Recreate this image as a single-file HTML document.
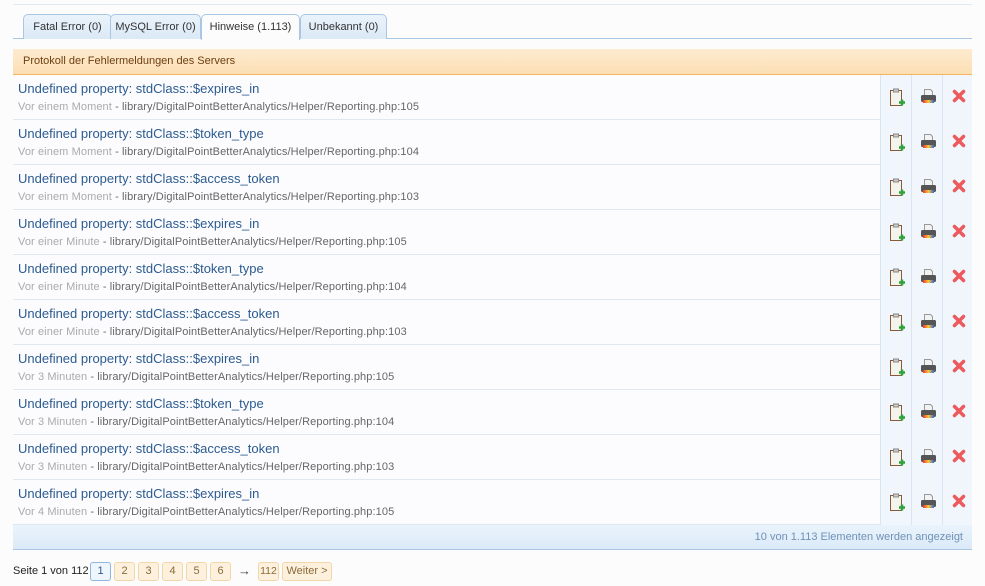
<!DOCTYPE html>
<html><head><meta charset="utf-8"><style>
*{margin:0;padding:0;box-sizing:border-box}
body{width:985px;height:586px;background:#fcfcfd;font-family:"Liberation Sans","DejaVu Sans",sans-serif;position:relative;overflow:hidden}
.topline{position:absolute;left:13px;top:4px;width:959px;height:1px;background:#dfeaf4}
.tabs{position:absolute;left:13px;top:14px;width:959px;height:25px;border-bottom:1px solid #a9c7e2}
.tab{position:absolute;top:0;height:25px;border:1px solid #a9c7e2;border-bottom:none;border-radius:5px 5px 0 0;background:linear-gradient(#eaf3fb,#dbe9f6);font-size:11px;color:#333;line-height:24px;text-align:center;white-space:nowrap}
.tab.act{background:#fcfcfd;height:26px}
.hdr{position:absolute;left:13px;top:49px;width:959px;height:26px;background:linear-gradient(#fdebd0,#fbdfb4);border-bottom:1px solid #f5b45d;font-size:11px;color:#6e3e10;line-height:25px;padding-left:10px}
.row{position:absolute;left:13px;width:959px;height:45px;border-bottom:1px solid #dde8f2;background:#fcfcfe}
.row .t{position:absolute;left:5px;top:6px;font-size:13px;color:#2b5b90}
.row .s{position:absolute;left:5px;top:26px;font-size:11px;color:#666;letter-spacing:0.1px}
.row .s i{font-style:normal;color:#aaa}
.c{position:absolute;top:0;width:31px;height:45px;background:#f0f6fc;border-left:1px solid #d8e6f3}
.c svg{position:absolute;left:8px;top:13px}
.foot{position:absolute;left:13px;top:525px;width:959px;height:25px;background:linear-gradient(#e9f3fc,#dceaf8);border-bottom:1px solid #a9c7e2;font-size:11px;color:#6f92b7;text-align:right;line-height:24px;padding-right:9px}
.pg{position:absolute;top:562px;font-size:11px;color:#222;line-height:18px}
.pb{position:absolute;top:562px;height:19px;border:1px solid #f3d7a8;background:#fdf1dd;border-radius:3px;font-size:11px;color:#8a6a3c;text-align:center;line-height:17px}
.pb.a{border-color:#8fb6dd;background:#eef5fc;color:#2b5b90}
</style></head><body>
<div class="topline"></div>
<div class="tabs">
<div class="tab" style="left:10px;width:89px">Fatal Error (0)</div>
<div class="tab" style="left:97px;width:91px">MySQL Error (0)</div>
<div class="tab act" style="left:188px;width:99px">Hinweise (1.113)</div>
<div class="tab" style="left:287px;width:87px">Unbekannt (0)</div>
</div>
<div class="hdr">Protokoll der Fehlermeldungen des Servers</div>
<div id="rows"></div>
<div class="foot">10 von 1.113 Elementen werden angezeigt</div>
<div class="pg" style="left:13px">Seite 1 von 112</div>
<div class="pb a" style="left:90px;width:21px">1</div>
<div class="pb" style="left:114px;width:21px">2</div>
<div class="pb" style="left:138px;width:21px">3</div>
<div class="pb" style="left:162px;width:21px">4</div>
<div class="pb" style="left:186px;width:21px">5</div>
<div class="pb" style="left:210px;width:21px">6</div>
<div class="pg" style="left:238px;color:#444;font-size:13px">→</div>
<div class="pb" style="left:258px;width:21px;font-size:10.5px">112</div>
<div class="pb" style="left:282px;width:50px">Weiter &gt;</div>
<script>
var d=[["$expires_in","Vor einem Moment",105],["$token_type","Vor einem Moment",104],["$access_token","Vor einem Moment",103],["$expires_in","Vor einer Minute",105],["$token_type","Vor einer Minute",104],["$access_token","Vor einer Minute",103],["$expires_in","Vor 3 Minuten",105],["$token_type","Vor 3 Minuten",104],["$access_token","Vor 3 Minuten",103],["$expires_in","Vor 4 Minuten",105]];
var clip='<svg width="17" height="19" viewBox="0 0 17 19"><rect x="1.5" y="2.5" width="11" height="15" fill="#f4f4ee" stroke="#8a5a36"/><rect x="4.5" y="1" width="5" height="3" fill="#ccc" stroke="#888"/><path d="M10 14.5h6M13 11.5v6" stroke="#2fa33a" stroke-width="2.5"/></svg>';
var pr='<svg width="17" height="17" viewBox="0 0 17 17"><path d="M4.5 1.5h6l2 2v4h-8z" fill="#f2f2f2" stroke="#999"/><rect x="1" y="7" width="15" height="7" rx="1.5" fill="#555"/><rect x="3" y="12" width="11" height="3" fill="url(#g)"/><defs><linearGradient id="g"><stop offset="0" stop-color="#e33"/><stop offset=".5" stop-color="#fc3"/><stop offset="1" stop-color="#36c"/></linearGradient></defs></svg>';
var x='<svg width="16" height="16" viewBox="0 0 16 16"><path d="M3.5 3.5l9 9M12.5 3.5l-9 9" stroke="#ec5a5e" stroke-width="3.5" stroke-linecap="round"/></svg>';
var h='';
d.forEach(function(r,i){h+='<div class="row" style="top:'+(75+45*i)+'px"><div class="t">Undefined property: stdClass::'+r[0]+'</div><div class="s"><i>'+r[1]+'</i> - library/DigitalPointBetterAnalytics/Helper/Reporting.php:'+r[2]+'</div><div class="c" style="left:867px">'+clip+'</div><div class="c" style="left:898px">'+pr+'</div><div class="c" style="left:929px;width:30px">'+x+'</div></div>';});
document.getElementById('rows').innerHTML=h;
</script>
</body></html>
